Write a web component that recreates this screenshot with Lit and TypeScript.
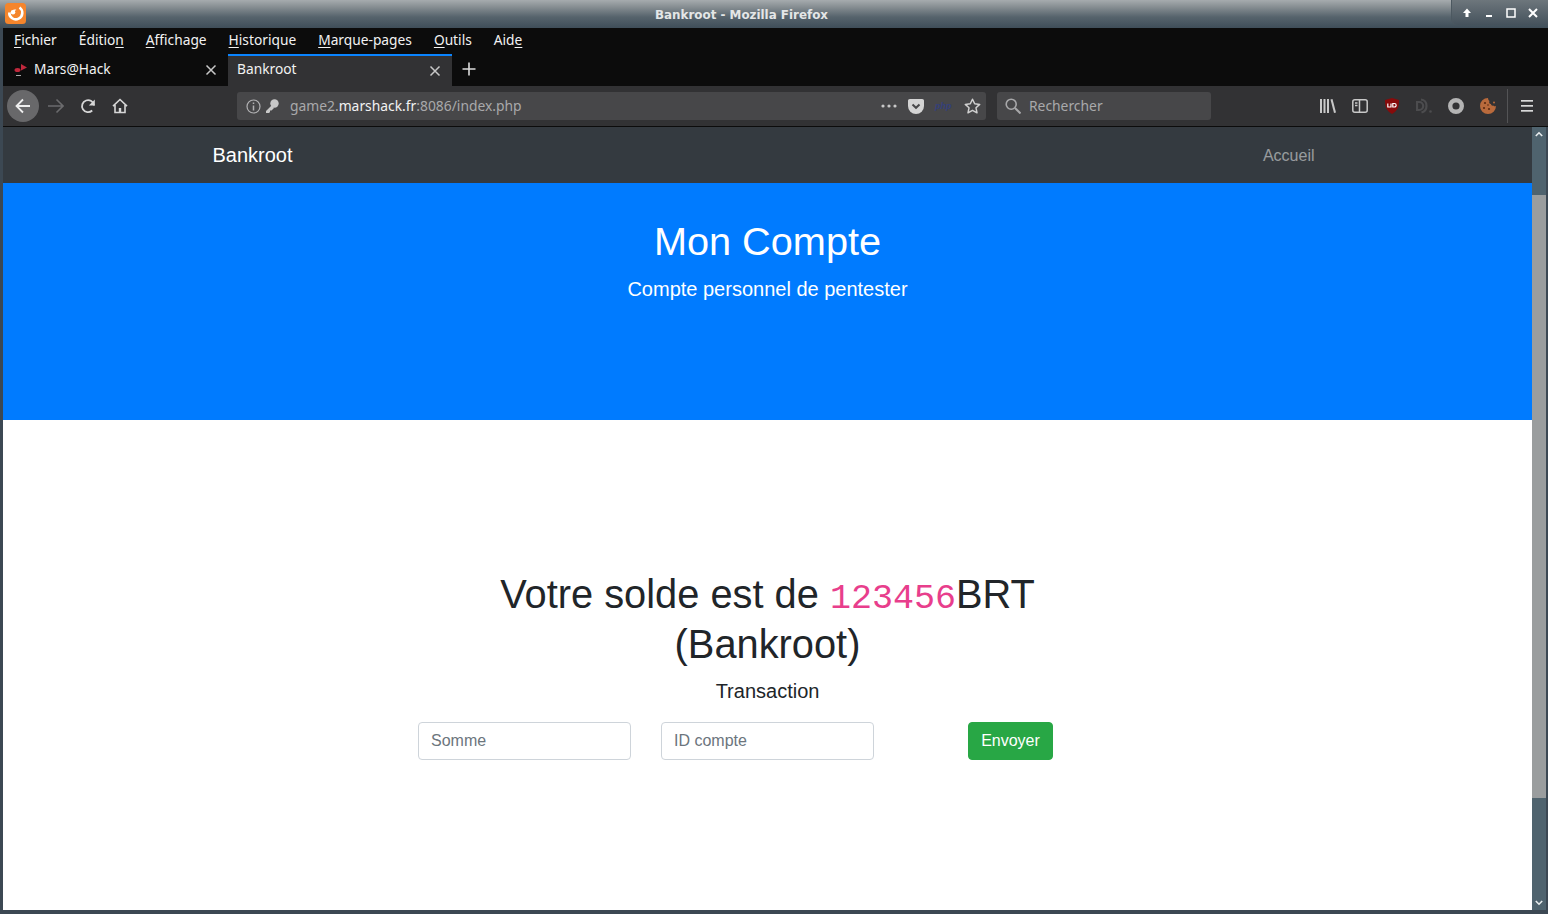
import { LitElement, css, html } from 'lit';
import { customElement } from 'lit/decorators.js';

const MENUS: [string, string, string][] = [
  ['', 'F', 'ichier'],
  ['Éditio', 'n', ''],
  ['', 'A', 'ffichage'],
  ['', 'H', 'istorique'],
  ['', 'M', 'arque-pages'],
  ['', 'O', 'utils'],
  ['Aid', 'e', ''],
];

@customElement('firefox-chrome')
class FirefoxChrome extends LitElement {
  static styles = css`
    :host {
      display: block;
      font-family: 'Noto Sans', sans-serif;
      font-size: 13.75px;
      color: #f2f2f2;
    }

    .titlebar {
      height: 28px;
      display: flex;
      align-items: flex-start;
      background: linear-gradient(#a6abae 0, #8b9296 6px, #56636c 17px, #3f4e59 28px);
    }

    .app-icon {
      width: 21px;
      height: 21px;
      margin: 3px 0 0 5px;
      flex: none;
    }

    .title {
      flex: 1;
      padding-left: 5px;
      text-align: center;
      font-family: 'DejaVu Sans', sans-serif;
      font-size: 11.9px;
      font-weight: bold;
      line-height: 30px;
      color: #e4e6e7;
    }

    .win-buttons {
      width: 96px;
      height: 25px;
      box-sizing: border-box;
      display: flex;
      align-items: center;
      gap: 6px;
      padding-left: 7px;
      border-bottom-left-radius: 6px;
      background: linear-gradient(#6d767c, #45525c);
      box-shadow: -1px 0 0 #4c5860;
    }

    .menubar {
      height: 26px;
      box-sizing: border-box;
      margin-left: 3px;
      display: flex;
      align-items: center;
      gap: 22px;
      padding: 0 0 4px 11px;
      background: #0c0c0c;
    }

    .menubar u {
      text-underline-offset: 2px;
    }

    .tabs {
      height: 32px;
      margin-left: 3px;
      display: flex;
      background: #0c0c0c;
    }

    .tab {
      width: 225px;
      box-sizing: border-box;
      display: flex;
      align-items: center;
      padding: 0 11px 0 11px;
    }

    .tab.active {
      width: 224px;
      padding-left: 9px;
      background: #323234;
      border-top: 2px solid #0a84ff;
    }

    .tab .name {
      flex: 1;
      margin: 0 0 4px 6px;
    }

    .tab.active .name {
      margin: 0 0 6px;
    }

    .new-tab {
      margin: 7px 0 0 9px;
    }

    .toolbar {
      height: 40px;
      margin-left: 3px;
      display: flex;
      align-items: center;
      background: #323234;
      border-bottom: 1px solid #0c0c0c;
      color: #a9a9ab;
      font-size: 13.85px;
    }

    .back {
      width: 32px;
      height: 32px;
      margin-left: 4px;
      border-radius: 50%;
      background: #68686a;
      display: flex;
      align-items: center;
      justify-content: center;
      flex: none;
    }

    .nav-btns {
      display: flex;
      gap: 16px;
      margin-left: 9px;
      width: 189px;
      flex: none;
    }

    .field {
      height: 28px;
      display: flex;
      align-items: center;
      box-sizing: border-box;
      border-radius: 3px;
      background: #474749;
      flex: none;
    }

    .field span.txt {
      margin-bottom: 2px;
    }

    .url {
      width: 749px;
      padding: 0 5px 0 9px;
    }

    .url .addr {
      flex: 1;
      margin-left: 11px;
    }

    .url b {
      font-weight: normal;
      color: #f2f2f2;
    }

    .search {
      width: 214px;
      margin-left: 11px;
      padding-left: 8px;
      gap: 8px;
    }

    .url-actions {
      display: flex;
      align-items: center;
      gap: 11px;
    }

    .php {
      width: 18px;
      font: italic bold 9px 'Liberation Sans', sans-serif;
      color: #34407a;
    }

    .ext {
      display: flex;
      align-items: center;
      gap: 16px;
      margin-left: 109px;
    }

    .sep {
      width: 1px;
      height: 34px;
      margin-left: 11px;
      background: #545456;
    }

    .burger {
      margin-left: 13px;
    }

    svg {
      display: block;
      flex: none;
    }
  `;

  render() {
    return html`
      <div class="titlebar">
        <svg class="app-icon" viewBox="0 0 21 21">
          <rect width="21" height="21" rx="3.500" fill="#f5852c" />
          <path d="M14.500 4.500A6.500 6.500 0 1 1 4.300 9.500" fill="none" stroke="#fff" stroke-width="2.600" />
          <circle cx="8" cy="9.300" r="2.300" fill="#fff" />
          <path d="M7 7.500c1.500-1.300 3.300-1.300 4.500-.6-1 .2-1.600.7-2 1.300z" fill="#fff" />
        </svg>
        <div class="title">Bankroot - Mozilla Firefox</div>
        <div class="win-buttons">
          <svg width="16" height="12" viewBox="0 0 16 12"><path d="M8 1.500 12 6H9.500v4h-3V6H4z" fill="#fff" /></svg>
          <svg width="16" height="12" viewBox="0 0 16 12"><rect x="5" y="8" width="6" height="2" fill="#fff" /></svg>
          <svg width="16" height="12" viewBox="0 0 16 12"><rect x="4" y="2" width="8" height="8" fill="none" stroke="#fff" stroke-width="1.500" /></svg>
          <svg width="16" height="12" viewBox="0 0 16 12"><path d="m4 2 8 8M12 2l-8 8" stroke="#fff" stroke-width="2" /></svg>
        </div>
      </div>

      <div class="menubar">
        ${MENUS.map(([a, u, b]) => html`<span>${a}<u>${u}</u>${b}</span>`)}
      </div>

      <div class="tabs">
        <div class="tab">
          <svg width="14" height="14" viewBox="0 0 14 14">
            <path d="M7 1l6 3.500L7 7.500z" fill="#c0283c" />
            <ellipse cx="3.500" cy="7" rx="3" ry="2" fill="#c0283c" />
            <rect x="2" y="12" width="5" height="1" fill="#aaa" />
          </svg>
          <span class="name">Mars@Hack</span>
          <svg width="12" height="12" viewBox="0 0 12 12"><path d="m1.500 1.500 9 9M10.500 1.500l-9 9" stroke="#c8c8c8" stroke-width="1.500" /></svg>
        </div>
        <div class="tab active">
          <span class="name">Bankroot</span>
          <svg width="12" height="12" viewBox="0 0 12 12"><path d="m1.500 1.500 9 9M10.500 1.500l-9 9" stroke="#c8c8c8" stroke-width="1.500" /></svg>
        </div>
        <svg class="new-tab" width="16" height="16" viewBox="0 0 16 16"><path d="M8 1.500v13M1.500 8h13" stroke="#dcdcdc" stroke-width="1.600" /></svg>
      </div>

      <div class="toolbar">
        <div class="back">
          <svg width="18" height="18" viewBox="0 0 18 18" fill="none" stroke="#eee" stroke-width="1.800"><path d="M16 9H2.500M9 2.500 2.500 9 9 15.500" /></svg>
        </div>
        <div class="nav-btns">
          <svg width="16" height="16" viewBox="0 0 16 16" fill="none" stroke="#6b6b6d" stroke-width="1.600"><path d="M0 8h15M8.500 1.500 15 8l-6.500 6.500" /></svg>
          <svg width="16" height="16" viewBox="0 0 16 16" fill="none" stroke="#d6d6d6" stroke-width="1.800"><path d="M14 7.500A6 6 0 1 0 12.200 12.500" /><path d="M14.800 1.500v6h-6" fill="#d6d6d6" stroke="none" /></svg>
          <svg width="16" height="16" viewBox="0 0 16 16" fill="none" stroke="#d6d6d6" stroke-width="1.600"><path d="M1 8.200 8 1.500l7 6.700M3 7v7.500h10V7" /><rect x="6.800" y="10" width="2.400" height="4" fill="#d6d6d6" stroke="none" /></svg>
        </div>

        <div class="field url">
          <svg width="15" height="15" viewBox="0 0 15 15" fill="none" stroke="#b1b1b3" stroke-width="1.200"><circle cx="7.500" cy="7.500" r="6.500" /><path d="M7.500 6.500v5" stroke-width="1.500" /><path d="M7.500 3.500v1.500" stroke-width="1.500" /></svg>
          <svg style="margin-left:4px" width="14" height="14" viewBox="0 0 14 14"><circle cx="9.500" cy="4.500" r="4.200" fill="#c8c8c8" /><path d="M7 6 1 12v2h3l1-1v-1.500h1.500L9 9z" fill="#c8c8c8" /></svg>
          <span class="addr txt">game2.<b>marshack.fr</b>:8086/index.php</span>
          <div class="url-actions">
            <svg width="16" height="4" viewBox="0 0 16 4" fill="#c8c8c8"><circle cx="2" cy="2" r="1.600" /><circle cx="8" cy="2" r="1.600" /><circle cx="14" cy="2" r="1.600" /></svg>
            <svg width="16" height="15" viewBox="0 0 16 15"><path d="M1.800 0h12.400C15.200 0 16 .8 16 1.800V7a8 8 0 0 1-16 0V1.800C0 .8.800 0 1.800 0z" fill="#d4d4d4" /><path d="m4.500 5.500 3.500 3.300 3.500-3.300" fill="none" stroke="#474749" stroke-width="2" /></svg>
            <span class="php">php</span>
            <svg width="17" height="16" viewBox="0 0 17 16" fill="none" stroke="#d0d0d0" stroke-width="1.500"><path d="m8.500 1.200 2.200 4.600 5 .6-3.700 3.400 1 5-4.500-2.500L4 14.800l1-5L1.300 6.400l5-.6z" stroke-linejoin="round" /></svg>
          </div>
        </div>

        <div class="field search">
          <svg width="16" height="16" viewBox="0 0 16 16" fill="none" stroke="#a8a8aa" stroke-width="1.600"><circle cx="6.200" cy="6.200" r="5" /><path d="m10 10 5.500 5.500" stroke-width="2" /></svg>
          <span class="txt">Rechercher</span>
        </div>

        <div class="ext">
          <svg width="16" height="14" viewBox="0 0 16 14" fill="#c8c8c8"><rect x="0" y="0" width="2" height="14" /><rect x="3.500" y="0" width="2" height="14" /><rect x="7" y="0" width="2" height="14" /><path d="m10.500.5 2-.5 3.500 13.500-2 .5z" /></svg>
          <svg width="16" height="14" viewBox="0 0 16 14" fill="none" stroke="#c8c8c8" stroke-width="1.500"><rect x=".8" y=".8" width="14.400" height="12.400" rx="2" /><path d="M7.500 1v12M3 4h2.500M3 6.500h2.500" /></svg>
          <svg width="16" height="16" viewBox="0 0 16 16"><path d="M1 2 8 0l7 2c0 7-1.500 11-7 14C2.500 13 1 9 1 2z" fill="#870b0b" /><path d="M3.800 5.500V9h3.200V5.500M8.800 5.500V9h1.600a1.750 1.750 0 0 0 0-3.500z" fill="none" stroke="#fff" stroke-width="1.200" /></svg>
          <svg width="16" height="16" viewBox="0 0 16 16" fill="none" stroke="#4c4c4e" stroke-width="2.200"><path d="M1 4h2.200a4 4 0 0 1 0 8H1zM5 1.500c3.500.3 5.500 3 5.500 6.200 0 3.500-2 5.900-5 6.800" /><circle cx="14.500" cy="13.500" r="1.300" fill="#4c4c4e" stroke="none" /></svg>
          <svg width="16" height="16" viewBox="0 0 16 16"><circle cx="8" cy="8" r="5.800" fill="none" stroke="#b4b4b4" stroke-width="4.400" /></svg>
          <svg width="16" height="16" viewBox="0 0 16 16">
            <path d="M8 0a8 8 0 1 0 8 8c-1 .5-2 .5-2.500-.5-1 .5-2.500 0-2.500-1.500C9.500 6 8.500 4.500 9.500 3 8.500 2.500 8 1 8 0z" fill="#b96a3c" />
            <circle cx="5" cy="5" r="1.100" fill="#5b2b12" /><circle cx="4" cy="10" r="1.100" fill="#5b2b12" /><circle cx="9" cy="11" r="1.100" fill="#5b2b12" /><circle cx="8" cy="7" r=".8" fill="#5b2b12" /><circle cx="14" cy="4.500" r="1" fill="#b96a3c" />
          </svg>
        </div>
        <div class="sep"></div>
        <svg class="burger" width="12" height="12" viewBox="0 0 12 12" fill="#d8d8d8"><rect width="12" height="1.700" y="0" /><rect width="12" height="1.700" y="5" /><rect width="12" height="1.700" y="10" /></svg>
      </div>
    `;
  }
}

@customElement('bank-page')
class BankPage extends LitElement {
  static styles = css`
    :host {
      display: block;
      height: 783px;
      overflow: hidden;
      background: #fff;
      color: #212529;
      font-family: 'Liberation Sans', sans-serif;
      font-size: 16px;
      line-height: 24px;
    }

    .navbar {
      height: 56px;
      box-sizing: border-box;
      background: #343a40;
    }

    .nav-inner {
      width: 1140px;
      height: 100%;
      margin: 0 auto;
      padding: 0 15px;
      box-sizing: border-box;
      display: flex;
      align-items: center;
      justify-content: space-between;
    }

    .brand {
      font-size: 20px;
      color: #fff;
    }

    .nav-link {
      padding: 2px 8px 0 0;
      color: rgba(255, 255, 255, 0.5);
    }

    .jumbotron {
      height: 237px;
      box-sizing: border-box;
      padding-top: 34px;
      background: #007bff;
      color: #fff;
      text-align: center;
    }

    h1 {
      margin: 0 0 9px;
      font-size: 39.7px;
      font-weight: 500;
      line-height: 48px;
    }

    .lead {
      margin: 0;
      font-size: 20px;
      line-height: 30px;
    }

    .content {
      width: 699px;
      margin: 0 auto;
      padding-top: 150px;
      text-align: center;
    }

    .content h2 {
      margin: 0 0 11px;
      font-size: 39.8px;
      font-weight: 500;
      line-height: 48px;
    }

    code {
      font-family: 'Liberation Mono', monospace;
      font-size: 35px;
      line-height: 42px;
      color: #e83e8c;
    }

    h5 {
      margin: 0 0 8px;
      font-size: 20px;
      font-weight: 500;
      line-height: 24px;
    }

    form {
      width: 729px;
      margin: 19px 0 0 -15px;
      display: grid;
      grid-template-columns: repeat(3, 243px);
    }

    input {
      width: 213px;
      height: 38px;
      box-sizing: border-box;
      margin: 0 auto;
      display: block;
      padding: 6px 12px;
      border: 1px solid #ced4da;
      border-radius: 4px;
      font: inherit;
      color: #495057;
    }

    input::placeholder {
      color: #6c757d;
      opacity: 1;
    }

    button {
      height: 38px;
      margin: 0 auto;
      padding: 6px 12px;
      border: 1px solid #28a745;
      border-radius: 4px;
      background: #28a745;
      color: #fff;
      font: inherit;
    }
  `;

  render() {
    return html`
      <nav class="navbar">
        <div class="nav-inner">
          <span class="brand">Bankroot</span>
          <span class="nav-link">Accueil</span>
        </div>
      </nav>
      <header class="jumbotron">
        <h1>Mon Compte</h1>
        <p class="lead">Compte personnel de pentester</p>
      </header>
      <section class="content">
        <h2>Votre solde est de <code>123456</code>BRT (Bankroot)</h2>
        <h5>Transaction</h5>
        <form @submit=${(e: Event) => e.preventDefault()}>
          <input type="text" placeholder="Somme" />
          <input type="text" placeholder="ID compte" />
          <button type="submit">Envoyer</button>
        </form>
      </section>
    `;
  }
}

@customElement('app-root')
export class AppRoot extends LitElement {
  static styles = css`
    :host {
      display: block;
      width: 1548px;
      height: 914px;
      overflow: hidden;
      background: #3c4853;
    }

    .view {
      display: flex;
      margin-left: 3px;
      margin-right: 2px;
    }

    bank-page {
      flex: 1;
    }

    .scrollbar {
      width: 14px;
      height: 783px;
      flex: none;
      display: flex;
      flex-direction: column;
      align-items: center;
      background: #4f636e;
    }

    .arrow {
      margin: 4px 0;
      flex: none;
    }

    .track {
      flex: 1;
      width: 100%;
    }

    .thumb {
      height: 603px;
      margin-top: 54px;
      background: #9a9d9e;
    }
  `;

  render() {
    return html`
      <firefox-chrome></firefox-chrome>
      <div class="view">
        <bank-page></bank-page>
        <div class="scrollbar">
          <svg class="arrow" width="8" height="6" viewBox="0 0 8 6" fill="none" stroke="#e8ecee" stroke-width="1.600"><path d="m.8 5 3.200-3.200L7.200 5" /></svg>
          <div class="track"><div class="thumb"></div></div>
          <svg class="arrow" width="8" height="6" viewBox="0 0 8 6" fill="none" stroke="#e8ecee" stroke-width="1.600"><path d="m.8 1 3.200 3.200L7.200 1" /></svg>
        </div>
      </div>
    `;
  }
}
